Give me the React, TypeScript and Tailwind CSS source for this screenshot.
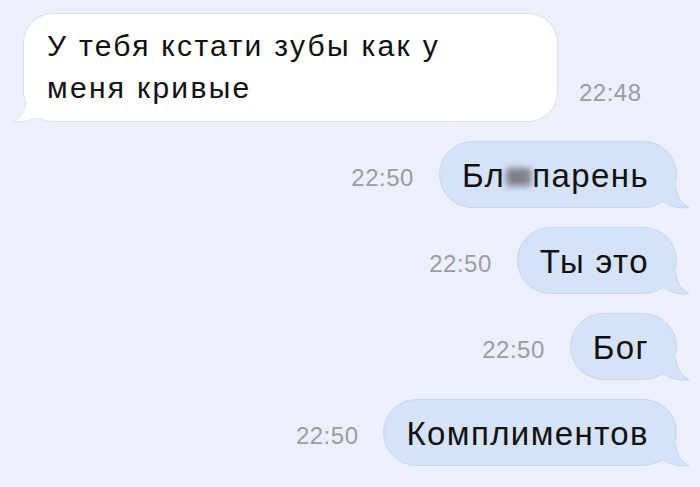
const font = { fontFamily: '"Liberation Sans", Arial, sans-serif' };

type Msg = { time: string; text: React.ReactNode };

const outgoing: Msg[] = [
  {
    time: "22:50",
    text: (
      <>
        Бл
        <span className="mx-[1px] inline-block h-[18px] w-[25px] translate-y-[1px] rounded-[3px] bg-[#7d8089] blur-[3px]" />
        {" "}парень
      </>
    ),
  },
  { time: "22:50", text: "Ты это" },
  { time: "22:50", text: "Бог" },
  { time: "22:50", text: "Комплиментов" },
];

function Tail({ side, fill, stroke }: { side: "left" | "right"; fill: string; stroke: string }) {
  const flip = side === "left";
  return (
    <svg
      width="26"
      height="26"
      viewBox="0 0 26 26"
      className={
        flip
          ? "absolute bottom-[-2px] left-[-11px] -scale-x-100"
          : "absolute bottom-[-2px] right-[-13px]"
      }
    >
      <path d="M0 0 L13 0 C13 12 18 20 26 24.5 C19 25.5 11 24.5 4 21 L0 21 Z" fill={fill} />
      <path d="M13 4 C13 13 18 20 26 24.5 C19 25.5 11 24.5 4 21" fill="none" stroke={stroke} strokeWidth="1" />
    </svg>
  );
}

function Outgoing({ msg }: { msg: Msg }) {
  return (
    <div className="flex items-center justify-end gap-[25px] pr-[23px]">
      <span className="mt-[6px] text-[24px] font-light tracking-[0.5px] text-[#9b9ca5]">{msg.time}</span>
      <div className="relative flex h-[67px] items-center whitespace-nowrap rounded-[34px] border border-[#c9d5ec] bg-[#d6e2f7] pl-[22px] pr-[27px] pt-[3px] text-[33px] tracking-[1.4px] text-[#111]">
        {msg.text}
        <Tail side="right" fill="#d6e2f7" stroke="#c9d5ec" />
      </div>
    </div>
  );
}

export default function App() {
  return (
    <div
      className="flex h-[487px] w-[700px] flex-col gap-[19px] overflow-hidden bg-[#ecf0fb] pt-[13px]"
      style={font}
    >
      <div className="flex items-end">
        <div className="relative ml-[23px] h-[109px] w-[535px] rounded-[30px] border border-[#dcdfe7] bg-white pl-[23px] pt-[11px] text-[30px] leading-[42px] tracking-[2.3px] text-[#111]">
          У тебя кстати зубы как у
          <br />
          меня кривые
          <Tail side="left" fill="#ffffff" stroke="#dcdfe7" />
        </div>
        <span className="mb-[11px] ml-[21px] text-[24px] font-light tracking-[0.5px] text-[#9b9ca5]">22:48</span>
      </div>
      {outgoing.map((m, i) => (
        <Outgoing key={i} msg={m} />
      ))}
    </div>
  );
}
